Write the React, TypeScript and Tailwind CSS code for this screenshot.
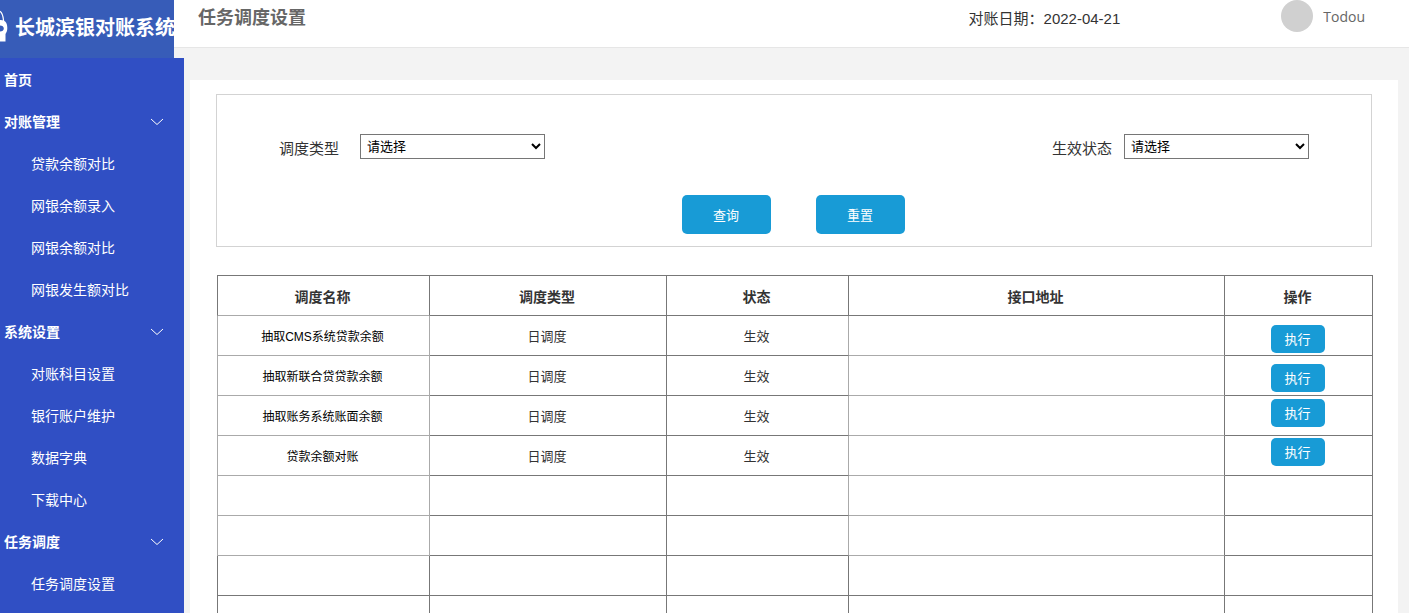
import { Fragment, useState } from "react";

type MenuGroup = { title: string; items: string[] };

const menu: MenuGroup[] = [
  { title: "对账管理", items: ["贷款余额对比", "网银余额录入", "网银余额对比", "网银发生额对比"] },
  { title: "系统设置", items: ["对账科目设置", "银行账户维护", "数据字典", "下载中心"] },
  { title: "任务调度", items: ["任务调度设置"] },
];

type Task = { name: string; type: string; status: string; url: string; align: string };

const tasks: Task[] = [
  { name: "抽取CMS系统贷款余额", type: "日调度", status: "生效", url: "", align: "items-end pb-0.5" },
  { name: "抽取新联合贷贷款余额", type: "日调度", status: "生效", url: "", align: "items-end pb-[3px]" },
  { name: "抽取账务系统账面余额", type: "日调度", status: "生效", url: "", align: "items-start pt-[3px]" },
  { name: "贷款余额对账", type: "日调度", status: "生效", url: "", align: "items-start pt-0.5" },
];

const light = "border-[#aaaaaa]";
const dark = "border-[#777777]";

function Logo() {
  return (
    <svg viewBox="0 0 8 34" className="h-[34px] w-2 shrink-0" fill="none" aria-hidden="true">
      <path d="M0 1.200C1.800 2.500 3.200 6 3.600 11" stroke="#fff" strokeWidth="1.300" />
      <path
        fillRule="evenodd"
        fill="#fff"
        d="M0 10C3 9.800 5 10.800 6 12.500C7 14 7.300 16 7.300 18C7.300 20.500 6.800 22 5.500 24V31.500H0V21.500C2.300 21.500 3.800 20.300 3.800 18.500C3.800 16.700 2.300 15.500 0 15.500Z"
      />
    </svg>
  );
}

function Chevron() {
  return (
    <svg viewBox="0 0 14 8" className="h-2 w-3.5" fill="none" stroke="#fff" aria-hidden="true">
      <path d="M1 1L7 6.500L13 1" />
    </svg>
  );
}

function Picker({ id, label, gap }: { id: string; label: string; gap: string }) {
  return (
    <div className={`flex items-center ${gap}`}>
      <label htmlFor={id} className="pt-1 text-[15px] leading-[21px]">
        {label}
      </label>
      <select id={id} className="h-[25px] w-[185px] border border-[#767676] bg-white pl-0.5 text-[13px] text-black">
        <option>请选择</option>
      </select>
    </div>
  );
}

export default function App() {
  const [open, setOpen] = useState([true, true, true]);

  return (
    <div className="flex h-screen flex-col overflow-hidden bg-[#f3f3f3] font-['Liberation_Sans','Noto_Sans_CJK_SC',sans-serif] text-[#333333]">
      <div className="flex shrink-0 items-start">
        <div className="flex h-[58px] w-[174px] shrink-0 items-start gap-[7px] overflow-hidden bg-[#375cb8] pt-2.5 text-white">
          <Logo />
          <span className="text-xl leading-9 font-bold whitespace-nowrap">长城滨银对账系统</span>
        </div>
        <header className="flex h-12 flex-1 items-start border-b border-[#e6e6e6] bg-white pr-11 pl-6">
          <h1 className="flex-1 text-lg leading-9 font-bold text-[#666666]">任务调度设置</h1>
          <p className="mr-[161px] text-[15px] leading-[38px]">对账日期：2022-04-21</p>
          <div className="flex items-center gap-2.5">
            <span className="size-8 rounded-full bg-[#d0d0d0]" />
            <span className="pt-0.5 font-['Open_Sans',sans-serif] text-sm text-[#666666]">Todou</span>
          </div>
        </header>
      </div>

      <div className="flex min-h-0 flex-1">
        <nav className="w-[184px] shrink-0 overflow-hidden bg-[#304fc4] text-sm text-white">
          <a href="#home" className="flex h-[42px] items-center pt-0.5 pl-1 font-bold">
            首页
          </a>
          {menu.map((group, i) => (
            <Fragment key={group.title}>
              <button
                type="button"
                aria-expanded={open[i]}
                onClick={() => setOpen(open.map((value, k) => (k === i ? !value : value)))}
                className="flex h-[42px] w-full items-center justify-between pt-0.5 pr-5 pl-1 font-bold"
              >
                {group.title}
                <Chevron />
              </button>
              {open[i] &&
                group.items.map((item) => (
                  <a key={item} href="#menu" className="flex h-[42px] items-center pt-0.5 pl-[31px]">
                    {item}
                  </a>
                ))}
            </Fragment>
          ))}
        </nav>

        <main className="mt-[22px] mr-[11px] ml-1.5 flex-1 overflow-hidden bg-white px-[26px] pt-3.5">
          <form
            onSubmit={(event) => event.preventDefault()}
            className="border border-[#d3d3d3] px-[62px] pt-[39px] pb-3"
          >
            <div className="flex justify-between">
              <Picker id="type" label="调度类型" gap="gap-[21px]" />
              <Picker id="status" label="生效状态" gap="gap-3" />
            </div>
            <div className="mt-9 flex justify-center gap-[45px] pr-0.5">
              <button type="submit" className="h-[39px] w-[89px] rounded-[5px] bg-[#189bd6] pt-0.5 text-[13px] text-white">
                查询
              </button>
              <button type="reset" className="h-[39px] w-[89px] rounded-[5px] bg-[#189bd6] pt-0.5 text-[13px] text-white">
                重置
              </button>
            </div>
          </form>

          <table className="mt-7 ml-px w-full table-fixed border-separate border-spacing-0 text-center text-[13px]">
            <colgroup>
              <col className="w-[213px]" />
              <col className="w-[237px]" />
              <col className="w-[182px]" />
              <col />
              <col className="w-[148px]" />
            </colgroup>
            <thead>
              <tr className="h-[41px] text-sm">
                <th className="border border-[#777777] border-b-[#aaaaaa] pt-0.5 pr-0.5">调度名称</th>
                <th className={`border-y border-r pt-0.5 pr-0.5 ${dark}`}>调度类型</th>
                <th className={`border-y border-r pt-0.5 pr-0.5 ${dark}`}>状态</th>
                <th className={`border-y border-r pt-0.5 pr-0.5 ${dark}`}>接口地址</th>
                <th className={`border-y border-r pt-0.5 pr-0.5 ${dark}`}>操作</th>
              </tr>
            </thead>
            <tbody>
              {tasks.map((task) => (
                <tr key={task.name} className="h-10">
                  <td className={`border-x border-b pt-0.5 pr-0.5 text-xs text-black ${light}`}>{task.name}</td>
                  <td className={`border-r border-b pt-0.5 pr-0.5 ${dark}`}>{task.type}</td>
                  <td className="border-r border-b border-r-[#aaaaaa] border-b-[#777777] pt-0.5 pr-0.5">
                    {task.status}
                  </td>
                  <td className="border-r border-b border-r-[#777777] border-b-[#aaaaaa]">{task.url}</td>
                  <td className={`border-r border-b py-0 pr-0.5 pl-0 ${dark}`}>
                    <div className={`flex h-[39px] justify-center ${task.align}`}>
                      <button
                        type="button"
                        className="h-7 w-[54px] rounded-[5px] bg-[#189bd6] pt-0.5 text-[13px] text-white"
                      >
                        执行
                      </button>
                    </div>
                  </td>
                </tr>
              ))}
              {[0, 1].map((row) => (
                <tr key={row} className="h-10">
                  <td className={`border-x border-b ${light}`} />
                  <td className={`border-r border-b ${dark}`} />
                  <td className="border-r border-b border-r-[#aaaaaa] border-b-[#777777]" />
                  <td className="border-r border-b border-r-[#777777] border-b-[#aaaaaa]" />
                  <td className={`border-r border-b ${dark}`} />
                </tr>
              ))}
              {[2, 3].map((row) => (
                <tr key={row} className="h-10">
                  <td className={`border-x border-b ${dark}`} />
                  <td className={`border-r border-b ${dark}`} />
                  <td className={`border-r border-b ${dark}`} />
                  <td className={`border-r border-b ${dark}`} />
                  <td className={`border-r border-b ${dark}`} />
                </tr>
              ))}
            </tbody>
          </table>
        </main>
      </div>
    </div>
  );
}
